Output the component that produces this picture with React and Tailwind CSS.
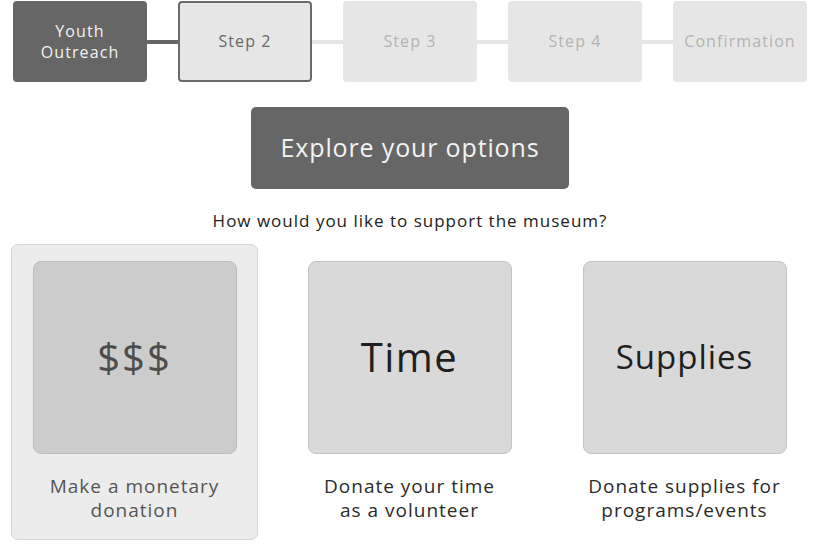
const steps = [
  { label: 'Youth Outreach', state: 'done' },
  { label: 'Step 2', state: 'current' },
  { label: 'Step 3', state: 'todo' },
  { label: 'Step 4', state: 'todo' },
  { label: 'Confirmation', state: 'todo' },
];

const options = [
  { big: '$$$', bigClass: 'text-[40px] tracking-[2px] text-[#4d4d4d]', caption: ['Make a monetary', 'donation'], selected: true },
  { big: 'Time', bigClass: 'text-[40px] tracking-[1.5px] text-[#1f1f1f]', caption: ['Donate your time', 'as a volunteer'] },
  { big: 'Supplies', bigClass: 'text-[33px] tracking-[1px] text-[#1f1f1f]', caption: ['Donate supplies for', 'programs/events'] },
];

const stepBox = {
  done: 'bg-[#666] text-[#f2f2f2] border-[#666]',
  current: 'bg-[#e6e6e6] text-[#666] border-[#6a6a6a]',
  todo: 'bg-[#e6e6e6] text-[#b3b3b3] border-[#e6e6e6]',
};

export default function App() {
  return (
    <div className="w-[820px] h-[546px] bg-white overflow-hidden" style={{ fontFamily: '"Open Sans", sans-serif' }}>
      {/* progress */}
      <div className="flex items-center pl-[13px] pt-px">
        {steps.map((s, i) => (
          <div key={s.label} className="flex items-center">
            {i > 0 && (
              <div className={`w-[31px] h-[4px] ${s.state === 'todo' ? 'bg-[#e6e6e6]' : 'bg-[#666]'}`} />
            )}
            <div
              className={`w-[134px] h-[81px] rounded-[4px] border-2 flex items-center justify-center text-center text-[16px] leading-[21px] tracking-[1.1px] font-medium ${stepBox[s.state]}`}
            >
              {s.label === 'Youth Outreach' ? (
                <span>Youth<br />Outreach</span>
              ) : (
                s.label
              )}
            </div>
          </div>
        ))}
      </div>

      <div className="flex justify-center mt-[25px]">
        <div className="w-[318px] h-[82px] rounded-[5px] bg-[#666] text-[#f3f3f3] text-[25px] flex items-center justify-center tracking-[0.85px]">
          Explore your options
        </div>
      </div>

      <p className="text-center text-[17px] tracking-[1px] text-[#222] mt-[19px] font-medium">
        How would you like to support the museum?
      </p>

      <div className="grid grid-cols-3 gap-[28px] pl-[11px] pr-[12px] mt-[10px]">
        {options.map((o) => (
          <div
            key={o.big}
            className={`h-[296px] rounded-[7px] border flex flex-col items-center pt-[16px] ${
              o.selected ? 'bg-[#ececec] border-[#d6d6d6]' : 'bg-white border-transparent'
            }`}
          >
            <div
              className={`w-[204px] h-[193px] rounded-[8px] border flex items-center justify-center ${
                o.selected ? 'bg-[#cccccc] border-[#bdbdbd]' : 'bg-[#d9d9d9] border-[#c4c4c4]'
              }`}
            >
              <span className={o.bigClass}>{o.big}</span>
            </div>
            <div
              className={`mt-[20px] text-center text-[19px] leading-[24px] tracking-[1px] font-medium ${
                o.selected ? 'text-[#555]' : 'text-[#2b2b2b]'
              }`}
            >
              {o.caption[0]}
              <br />
              {o.caption[1]}
            </div>
          </div>
        ))}
      </div>
    </div>
  );
}
